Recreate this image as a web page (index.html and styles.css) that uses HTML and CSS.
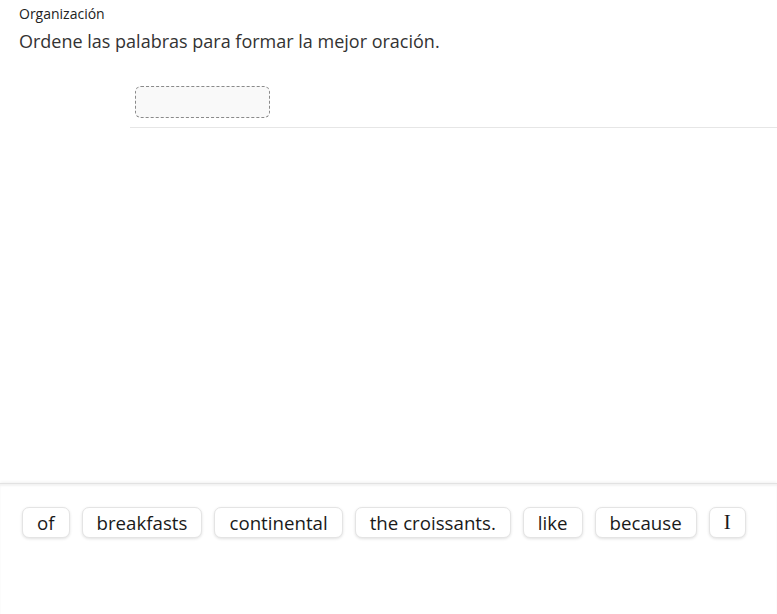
FILE: index.html
```html
<!DOCTYPE html>
<html lang="es">
<head>
<meta charset="utf-8">
<title>Organización</title>
<link rel="stylesheet" href="styles.css">
</head>
<body>
<div class="page">
  <header class="head">
    <div class="label">Organización</div>
    <div class="prompt">Ordene las palabras para formar la mejor oración.</div>
  </header>
  <section class="answer">
    <div class="answer-row">
      <div class="slot"></div>
    </div>
  </section>
  <div class="spacer"></div>
  <section class="tray">
    <div class="chips">
      <span class="chip">of</span>
      <span class="chip">breakfasts</span>
      <span class="chip">continental</span>
      <span class="chip">the croissants.</span>
      <span class="chip">like</span>
      <span class="chip">because</span>
      <span class="chip chip-serif">I</span>
    </div>
  </section>
</div>
</body>
</html>
```

FILE: styles.css
```css
html, body {
  margin: 0;
  padding: 0;
  background: #ffffff;
}
body {
  font-family: "Open Sans", "Noto Sans", sans-serif;
  color: #222;
  width: 777px;
  height: 614px;
  overflow: hidden;
}
.page {
  display: flex;
  flex-direction: column;
  height: 614px;
}
.head {
  padding: 4px 0 0 19px;
}
.label {
  font-size: 14px;
  line-height: 19px;
  color: #222;
}
.prompt {
  font-size: 18px;
  line-height: 24px;
  margin-top: 6px;
  color: #333;
}
.answer {
  margin-left: 130px;
  margin-top: 33px;
}
.answer-row {
  padding: 0 0 9px 5px;
  border-bottom: 1px solid #e6e6e6;
}
.slot {
  width: 133px;
  height: 30px;
  border: 1px dashed #8a8a8a;
  border-radius: 6px;
  background: #f9f9f9;
}
.spacer {
  flex: 1;
}
.tray {
  height: 131px;
  border-top: 1px solid #e2e2e2;
  box-shadow: 0 -1px 3px rgba(0,0,0,0.06), inset 0 2px 2px rgba(0,0,0,0.05);
  padding: 23px 0 0 22px;
  box-sizing: border-box;
}
.chips {
  display: flex;
  gap: 12px;
}
.chip {
  display: inline-flex;
  align-items: center;
  height: 29px;
  padding: 0 14px;
  border: 1px solid #e4e4e4;
  border-radius: 7px;
  background: #fff;
  box-shadow: 0 1px 3px rgba(0,0,0,0.12);
  font-size: 18.7px;
  color: #1a1a1a;
}
.chip-serif {
  font-family: "Liberation Serif", "DejaVu Serif", serif;
  font-size: 21px;
  padding: 0 14px;
}
```
